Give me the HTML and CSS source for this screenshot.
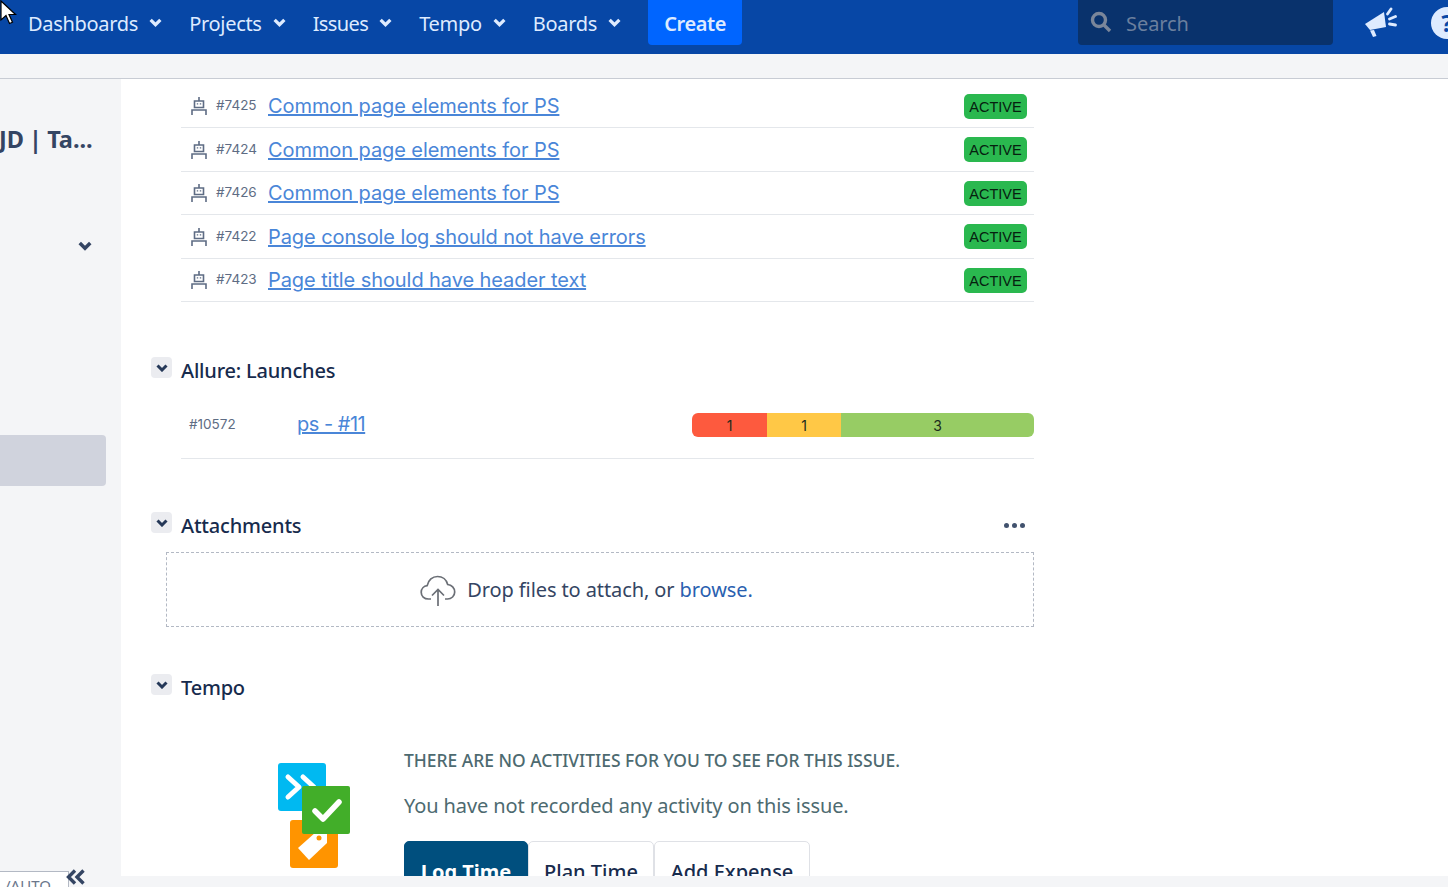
FILE: index.html
```html
<!DOCTYPE html>
<html lang="en">
<head>
    <meta charset="UTF-8">
    <title>Issue</title>
    <link rel="stylesheet" href="styles.css">
</head>
<body>
    <div id="page">
        <header class="nav">
            <a class="nav-item nav-first">Dashboards <svg class="caret" viewBox="0 0 12 8"><path d="M1.5 1.5 6 6l4.5-4.5" /></svg></a>
            <a class="nav-item">Projects <svg class="caret" viewBox="0 0 12 8"><path d="M1.5 1.5 6 6l4.5-4.5" /></svg></a>
            <a class="nav-item nav-issues">Issues <svg class="caret" viewBox="0 0 12 8"><path d="M1.5 1.5 6 6l4.5-4.5" /></svg></a>
            <a class="nav-item">Tempo <svg class="caret" viewBox="0 0 12 8"><path d="M1.5 1.5 6 6l4.5-4.5" /></svg></a>
            <a class="nav-item">Boards <svg class="caret" viewBox="0 0 12 8"><path d="M1.5 1.5 6 6l4.5-4.5" /></svg></a>
            <button class="create">Create</button>
            <div class="search">
                <svg class="search-icon" viewBox="0 0 22 22"><circle cx="9" cy="9" r="6.5" /><path d="m14 14 6 6" /></svg>
                <span>Search</span>
            </div>
            <svg class="megaphone" viewBox="0 0 32 30"><path d="M0 17 19 5l2 15-16 3z" fill="#deebff" /><path d="M5 23.5 9 23l2.5 6-3.5 1z" fill="#deebff" /><path d="m22.5 7 3.5-5M24.5 12l6-2.5M24.5 17l6 1" fill="none" stroke="#deebff" stroke-width="2.8" stroke-linecap="round" /></svg>
            <div class="help">?</div>
        </header>
        <div class="subbar"></div>
        <div class="main">
            <aside class="side">
                <div class="side-title">JD | Ta...</div>
                <svg class="side-caret" viewBox="0 0 12 8"><path d="M1.5 1.5 6 6l4.5-4.5" /></svg>
                <div class="side-active"></div>
            </aside>
            <div class="content">
                <div class="tests">
                    <div class="test-row">
                        <svg class="bot" viewBox="0 0 16 18"><path d="M8 0v4M3.5 4h9v6.5h-9zM1 18v-5h14v5" /><path d="M5.8 6.2h1.4v1.4H5.8zM8.8 6.2h1.4v1.4H8.800z" fill="#5e6c84" stroke="none" /></svg>
                        <span class="num">#7425</span>
                        <a class="link">Common page elements for PS</a>
                        <span class="badge">ACTIVE</span>
                    </div>
                    <div class="test-row">
                        <svg class="bot" viewBox="0 0 16 18"><path d="M8 0v4M3.5 4h9v6.5h-9zM1 18v-5h14v5" /><path d="M5.8 6.2h1.4v1.4H5.8zM8.8 6.2h1.4v1.4H8.800z" fill="#5e6c84" stroke="none" /></svg>
                        <span class="num">#7424</span>
                        <a class="link">Common page elements for PS</a>
                        <span class="badge">ACTIVE</span>
                    </div>
                    <div class="test-row">
                        <svg class="bot" viewBox="0 0 16 18"><path d="M8 0v4M3.5 4h9v6.5h-9zM1 18v-5h14v5" /><path d="M5.8 6.2h1.4v1.4H5.8zM8.8 6.2h1.4v1.4H8.800z" fill="#5e6c84" stroke="none" /></svg>
                        <span class="num">#7426</span>
                        <a class="link">Common page elements for PS</a>
                        <span class="badge">ACTIVE</span>
                    </div>
                    <div class="test-row">
                        <svg class="bot" viewBox="0 0 16 18"><path d="M8 0v4M3.5 4h9v6.5h-9zM1 18v-5h14v5" /><path d="M5.8 6.2h1.4v1.4H5.8zM8.8 6.2h1.4v1.4H8.800z" fill="#5e6c84" stroke="none" /></svg>
                        <span class="num">#7422</span>
                        <a class="link">Page console log should not have errors</a>
                        <span class="badge">ACTIVE</span>
                    </div>
                    <div class="test-row">
                        <svg class="bot" viewBox="0 0 16 18"><path d="M8 0v4M3.5 4h9v6.5h-9zM1 18v-5h14v5" /><path d="M5.8 6.2h1.4v1.4H5.8zM8.8 6.2h1.4v1.4H8.800z" fill="#5e6c84" stroke="none" /></svg>
                        <span class="num">#7423</span>
                        <a class="link">Page title should have header text</a>
                        <span class="badge">ACTIVE</span>
                    </div>
                </div>

                <div class="sec-head sec-allure">
                    <div class="toggle"><svg viewBox="0 0 12 8"><path d="M1.5 1.5 6 6l4.5-4.5" /></svg></div>
                    <h3>Allure: Launches</h3>
                </div>
                <div class="launch">
                    <span class="num launch-num">#10572</span>
                    <a class="link">ps - #11</a>
                    <div class="bar">
                        <span class="bar-red">1</span>
                        <span class="bar-yellow">1</span>
                        <span class="bar-green">3</span>
                    </div>
                </div>

                <div class="sec-head sec-attach">
                    <div class="toggle"><svg viewBox="0 0 12 8"><path d="M1.5 1.5 6 6l4.5-4.5" /></svg></div>
                    <h3>Attachments</h3>
                    <div class="dots"><i></i><i></i><i></i></div>
                </div>
                <div class="drop">
                    <svg class="cloud" viewBox="0 0 36 32"><path d="M11 24H8.5C4 24 1.2 21 1.2 17.3c0-3.5 2.6-6.300 6-6.700C8.300 5 12.500 1.500 17.500 1.500c5 0 9 3.300 10.200 8 4 .3 7 3.500 7 7.500 0 4-3.200 7-7.200 7H25" /><path d="M18 31V15M12 20.5l6-6 6 6" /></svg>
                    <span>Drop files to attach, or <a>browse.</a></span>
                </div>

                <div class="sec-head sec-tempo">
                    <div class="toggle"><svg viewBox="0 0 12 8"><path d="M1.5 1.5 6 6l4.5-4.5" /></svg></div>
                    <h3>Tempo</h3>
                </div>
                <div class="tempo">
                    <svg class="tempo-art" viewBox="0 0 72 105">
                        <rect x="0" y="0" width="48" height="48" rx="3" fill="#00b9f1" />
                        <path d="M10 14 21 24 10 34M25 14 36 24" fill="none" stroke="#fff" stroke-width="5" stroke-linecap="round" stroke-linejoin="round" />
                        <rect x="12" y="57" width="48" height="48" rx="3" fill="#ff9400" />
                        <path d="M20 85 38 69h11v11L31 97z" fill="#fff" />
                        <circle cx="41" cy="75" r="2.5" fill="#ff9400" />
                        <rect x="24" y="23" width="48" height="48" rx="2" fill="#42ae29" />
                        <path d="M37 48 45 56 61 39" fill="none" stroke="#fff" stroke-width="5.5" stroke-linecap="round" stroke-linejoin="round" />
                    </svg>
                    <div class="tempo-text">
                        <div class="tempo-title">THERE ARE NO ACTIVITIES FOR YOU TO SEE FOR THIS ISSUE.</div>
                        <p>You have not recorded any activity on this issue.</p>
                        <div class="tempo-btns">
                            <button class="btn btn-main">Log Time</button>
                            <button class="btn btn-plan">Plan Time</button>
                            <button class="btn btn-exp">Add Expense</button>
                        </div>
                    </div>
                </div>
            </div>
        </div>
        <div class="foot"></div>
        <div class="auto-box">/AUTO</div>
        <svg class="collapse" viewBox="0 0 20 16"><path d="M9 1.5 2.5 8 9 14.5M17.5 1.5 11 8l6.5 6.5" /></svg>
        <svg class="cursor" viewBox="0 0 19 27"><path d="M1 1v19l5-4.5 3.5 8 3-1.3-3.5-7.700h6.500z" fill="#fff" stroke="#000" stroke-width="1.2" /></svg>
    </div>
</body>
</html>
```

FILE: styles.css
```css
*{
    box-sizing: border-box;
    margin: 0px;
    padding: 0px;
}
body{
    font-family: "Noto Sans", sans-serif;
    background-color: #fff;
}
#page{
    position: relative;
    width: 1448px;
    height: 887px;
    overflow: hidden;
    display: flex;
    flex-direction: column;
}

/* top bar */
.nav{
    height: 54px;
    flex-shrink: 0;
    background-color: #0747a6;
    display: flex;
    align-items: flex-start;
    color: #deebff;
}
.nav-item{
    display: flex;
    align-items: center;
    flex-shrink: 0;
    height: 47px;
    font-size: 20px;
    letter-spacing: -0.3px;
    margin-right: 27px;
    white-space: nowrap;
}
.nav-first{
    margin-left: 28px;
}
.nav-issues{
    letter-spacing: -0.6px;
}
.caret{
    width: 13px;
    height: 9px;
    margin-left: 11px;
    margin-bottom: 3px;
    fill: none;
    stroke: #deebff;
    stroke-width: 3;
}
.create{
    flex-shrink: 0;
    margin-left: 0px;
    width: 94px;
    height: 45px;
    padding-top: 2px;
    border: none;
    border-radius: 0 0 4px 4px;
    background-color: #0065ff;
    color: #deebff;
    font-family: inherit;
    font-size: 20px;
    font-weight: 600;
    letter-spacing: -0.4px;
}
.search{
    flex-shrink: 0;
    margin-left: 336px;
    width: 255px;
    height: 45px;
    border-radius: 0 0 4px 4px;
    background-color: #09326c;
    display: flex;
    align-items: center;
    padding-left: 12px;
    padding-top: 2px;
    color: #6b7f9e;
    font-size: 20px;
    letter-spacing: -0.1px;
}
.search-icon{
    width: 22px;
    height: 22px;
    margin-right: 14px;
    margin-bottom: 4px;
    fill: none;
    stroke: #7a869a;
    stroke-width: 3.4;
}
.megaphone{
    flex-shrink: 0;
    width: 32px;
    height: 30px;
    margin-left: 32px;
    margin-top: 7px;
}
.help{
    width: 32px;
    height: 32px;
    margin-left: 34px;
    margin-top: 7px;
    border-radius: 50%;
    background-color: #deebff;
    color: #0747a6;
    font-size: 24px;
    font-weight: 700;
    line-height: 32px;
    text-align: center;
    flex-shrink: 0;
}
.subbar{
    height: 25px;
    flex-shrink: 0;
    background-color: #f4f5f7;
    border-bottom: 1px solid #c8ccd4;
}

/* main area */
.main{
    flex: 1;
    display: flex;
    min-height: 0;
    overflow: hidden;
}
.side{
    width: 121px;
    flex-shrink: 0;
    background-color: #f4f5f7;
    overflow: hidden;
}
.side-title{
    margin-top: 45px;
    margin-left: -1px;
    font-size: 23.5px;
    font-weight: 700;
    line-height: 30px;
    color: #344563;
    white-space: nowrap;
    word-spacing: -1px;
}
.side-caret{
    display: block;
    width: 14px;
    height: 10px;
    margin-top: 87px;
    margin-left: 78px;
    fill: none;
    stroke: #344563;
    stroke-width: 3;
}
.side-active{
    width: 106px;
    height: 51px;
    margin-top: 184px;
    background-color: #d0d3dd;
    border-radius: 0 4px 4px 0;
}
.content{
    flex: 1;
    padding-left: 30px;
    min-width: 0;
}
.tests{
    width: 883px;
    padding-left: 30px;
    padding-top: 5.6px;
}
.test-row{
    height: 43.5px;
    display: flex;
    align-items: center;
    padding-left: 10px;
    padding-right: 7px;
    padding-top: 1px;
    border-bottom: 1px solid #e4e7eb;
}
.bot{
    width: 16px;
    height: 18px;
    flex-shrink: 0;
    fill: none;
    stroke: #5e6c84;
    stroke-width: 1.6;
}
.num{
    font-family: Inter, sans-serif;
    font-size: 13.5px;
    color: #5e6c84;
}
.test-row .num{
    margin-left: 9px;
    margin-top: -2px;
    width: 52px;
}
.link{
    font-family: Inter, sans-serif;
    font-size: 20px;
    letter-spacing: -0.08px;
    color: #4a86d8;
    text-decoration: underline;
    white-space: nowrap;
}
.badge{
    margin-left: auto;
    width: 63px;
    height: 25px;
    border-radius: 5px;
    background-color: #2ab84f;
    color: #06200f;
    font-family: "Liberation Sans", sans-serif;
    font-size: 14.5px;
    line-height: 27px;
    text-align: center;
}

/* sections */
.sec-head{
    width: 883px;
    display: flex;
    align-items: center;
    height: 30px;
}
.sec-head h3{
    font-size: 20px;
    font-weight: 500;
    color: #172b4d;
    margin-left: 9px;
    letter-spacing: -0.2px;
}
.toggle{
    width: 21px;
    height: 21px;
    margin-top: -5px;
    border-radius: 4px;
    background-color: #ebecf0;
    display: flex;
    align-items: center;
    justify-content: center;
}
.toggle svg{
    width: 12px;
    height: 8px;
    fill: none;
    stroke: #253858;
    stroke-width: 3;
}
.sec-allure{
    margin-top: 53px;
}
.launch{
    width: 853px;
    height: 69px;
    margin-left: 30px;
    margin-top: 5px;
    display: flex;
    align-items: center;
    padding-left: 8px;
    padding-bottom: 1px;
    border-bottom: 1px solid #e4e7eb;
}
.launch-num{
    width: 108px;
}
.launch .link{
    letter-spacing: -0.5px;
}
.bar{
    margin-left: auto;
    width: 342px;
    height: 24px;
    margin-top: 2px;
    border-radius: 6px;
    overflow: hidden;
    display: flex;
    font-family: Inter, sans-serif;
    font-size: 14px;
    line-height: 25px;
    text-align: center;
    color: #1c2b1c;
}
.bar-red{
    width: 75px;
    background-color: #fd5a3e;
}
.bar-yellow{
    width: 74px;
    background-color: #ffc846;
}
.bar-green{
    flex: 1;
    background-color: #97cc64;
}
.sec-attach{
    margin-top: 51px;
}
.dots{
    margin-left: auto;
    margin-right: 9px;
    display: flex;
    gap: 3px;
}
.dots i{
    width: 5px;
    height: 5px;
    border-radius: 50%;
    background-color: #42526e;
}
.drop{
    width: 868px;
    height: 75px;
    margin-left: 15px;
    margin-top: 12px;
    padding-right: 27px;
    border: 1px dashed #b3b9c4;
    display: flex;
    align-items: center;
    justify-content: center;
    font-size: 20px;
    color: #344563;
    letter-spacing: -0.1px;
}
.drop a{
    color: #2a5fb0;
}
.cloud{
    width: 36px;
    height: 32px;
    margin-right: 11px;
    margin-top: 2px;
    fill: none;
    stroke: #6b6f76;
    stroke-width: 1.7;
}
.sec-tempo{
    margin-top: 45px;
}

/* tempo empty state */
.tempo{
    display: flex;
    margin-top: 61px;
    padding-left: 127px;
}
.tempo-art{
    width: 72px;
    height: 105px;
    flex-shrink: 0;
}
.tempo-text{
    margin-left: 54px;
    margin-top: -15px;
}
.tempo-title{
    font-size: 17.45px;
    font-weight: 500;
    line-height: 24px;
    color: #4d6a70;
}
.tempo-text p{
    margin-top: 20px;
    font-size: 20px;
    line-height: 28px;
    letter-spacing: -0.1px;
    color: #4d6a70;
}
.tempo-btns{
    display: flex;
    margin-top: 21px;
}
.btn{
    height: 60px;
    border-radius: 5px 5px 0 0;
    border: 1px solid #dfe1e6;
    background-color: #fff;
    color: #172b4d;
    font-family: inherit;
    font-size: 20px;
    font-weight: 500;
}
.btn-main{
    width: 124px;
    background-color: #004f7e;
    border-color: #004f7e;
    color: #fff;
    font-weight: 700;
}
.btn-plan{
    width: 126px;
}
.btn-exp{
    width: 156px;
}
.foot{
    height: 11px;
    flex-shrink: 0;
    background-color: #f4f5f7;
}

/* overlays */
.auto-box{
    position: absolute;
    left: 0;
    top: 871px;
    width: 69px;
    height: 30px;
    border-top: 1px solid #b3b9c4;
    border-right: 1px solid #b3b9c4;
    background-color: #fff;
    font-size: 15px;
    line-height: 27px;
    color: #6b778c;
    text-indent: 5px;
    overflow: hidden;
}
.collapse{
    position: absolute;
    left: 66px;
    top: 869px;
    width: 20px;
    height: 16px;
    fill: none;
    stroke: #344563;
    stroke-width: 3.4;
}
.cursor{
    position: absolute;
    left: 0;
    top: 0;
    width: 19px;
    height: 27px;
}
```
